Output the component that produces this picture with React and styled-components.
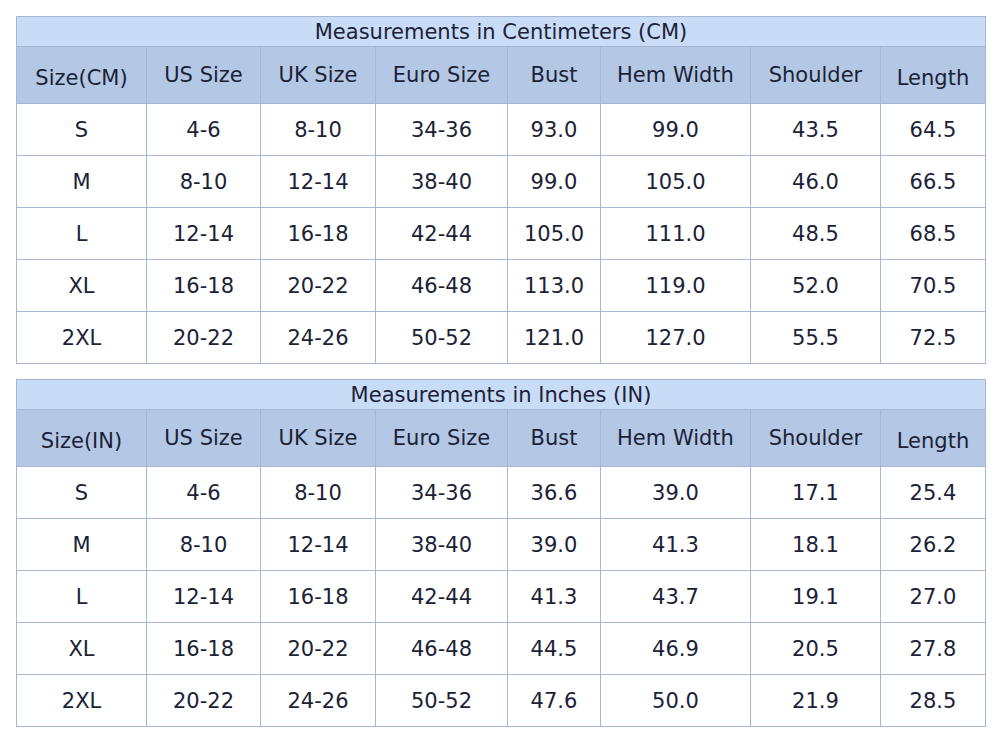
import React from "react";
import styled, { createGlobalStyle } from "styled-components";

const GlobalStyle = createGlobalStyle`
  body {
    margin: 0;
    background: #ffffff;
    font-family: "DejaVu Sans", Verdana, sans-serif;
  }
`;

const Page = styled.div`
  display: flex;
  flex-direction: column;
  gap: 15px;
  padding: 16px;
`;

const Table = styled.div`
  display: grid;
  grid-template-columns: 129px 113px 114px 131px 92px 149px 129px 104px;
  grid-template-rows: 29px 56px repeat(5, 51px);
  gap: 1px;
  padding: 1px;
  width: 970px;
  box-sizing: border-box;
  background-color: #a5b7d4;
  color: #1b2236;
  font-size: 21px;
`;

const Title = styled.div`
  grid-column: 1 / -1;
  display: flex;
  align-items: center;
  justify-content: center;
  background-color: #c9dcf7;
  line-height: 1;
  padding-top: 2px;
  box-sizing: border-box;
`;

const HeadCell = styled.div`
  display: flex;
  align-items: center;
  justify-content: center;
  background-color: #b4c8e5;
  padding-top: ${(p) => (p.$low ? "6px" : "0")};
  box-sizing: border-box;
  white-space: nowrap;
`;

const Cell = styled.div`
  display: flex;
  align-items: center;
  justify-content: center;
  background-color: #ffffff;
  white-space: nowrap;
`;

const sizes = ["S", "M", "L", "XL", "2XL"];
const us = ["4-6", "8-10", "12-14", "16-18", "20-22"];
const uk = ["8-10", "12-14", "16-18", "20-22", "24-26"];
const euro = ["34-36", "38-40", "42-44", "46-48", "50-52"];

const tables = [
  {
    title: "Measurements in Centimeters (CM)",
    first: "Size(CM)",
    bust: ["93.0", "99.0", "105.0", "113.0", "121.0"],
    hem: ["99.0", "105.0", "111.0", "119.0", "127.0"],
    shoulder: ["43.5", "46.0", "48.5", "52.0", "55.5"],
    length: ["64.5", "66.5", "68.5", "70.5", "72.5"],
  },
  {
    title: "Measurements in Inches (IN)",
    first: "Size(IN)",
    bust: ["36.6", "39.0", "41.3", "44.5", "47.6"],
    hem: ["39.0", "41.3", "43.7", "46.9", "50.0"],
    shoulder: ["17.1", "18.1", "19.1", "20.5", "21.9"],
    length: ["25.4", "26.2", "27.0", "27.8", "28.5"],
  },
];

function SizeTable({ data }) {
  const heads = [
    { label: data.first, low: true },
    { label: "US Size" },
    { label: "UK Size" },
    { label: "Euro Size" },
    { label: "Bust" },
    { label: "Hem Width" },
    { label: "Shoulder" },
    { label: "Length", low: true },
  ];
  return (
    <Table>
      <Title>{data.title}</Title>
      {heads.map((h) => (
        <HeadCell key={h.label} $low={h.low}>
          {h.label}
        </HeadCell>
      ))}
      {sizes.map((s, i) => (
        <React.Fragment key={s}>
          <Cell>{s}</Cell>
          <Cell>{us[i]}</Cell>
          <Cell>{uk[i]}</Cell>
          <Cell>{euro[i]}</Cell>
          <Cell>{data.bust[i]}</Cell>
          <Cell>{data.hem[i]}</Cell>
          <Cell>{data.shoulder[i]}</Cell>
          <Cell>{data.length[i]}</Cell>
        </React.Fragment>
      ))}
    </Table>
  );
}

export default function App() {
  return (
    <>
      <GlobalStyle />
      <Page>
        {tables.map((t) => (
          <SizeTable key={t.title} data={t} />
        ))}
      </Page>
    </>
  );
}
